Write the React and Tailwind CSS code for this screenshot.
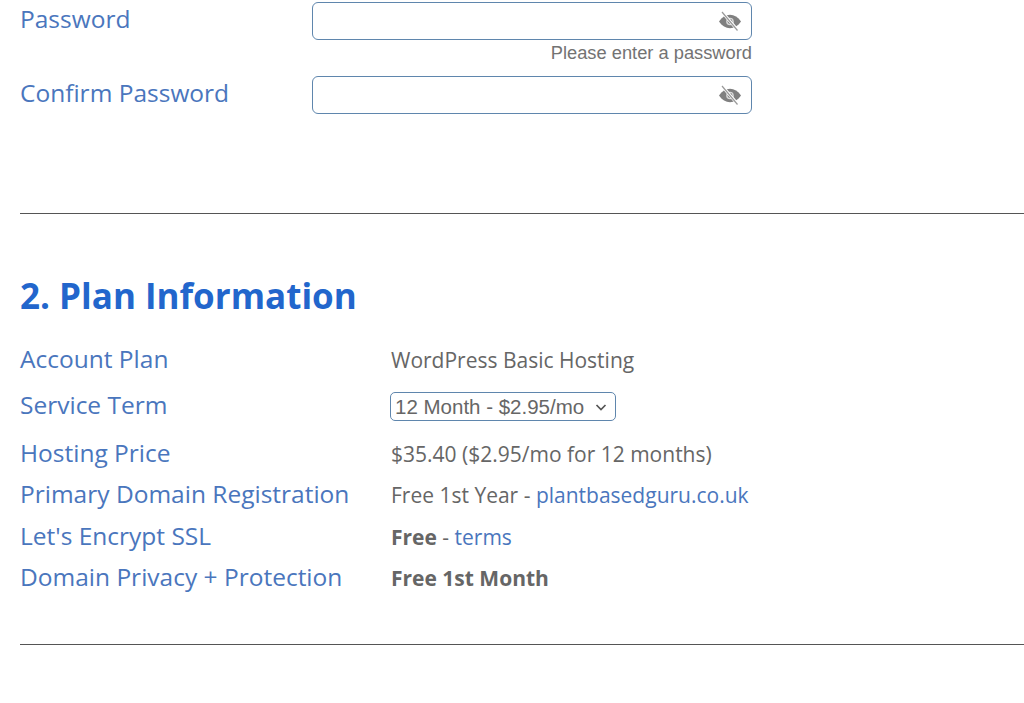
const label = "text-[#4a76bd] text-[24.5px] leading-[30px]";
const value = "text-[#666666] text-[21px] leading-[28px] mt-[2px]";
const link = "text-[#4a76bd]";

function EyeOff() {
  return (
    <svg width="24" height="20" viewBox="0 0 24 20" className="shrink-0">
      <path d="M1 10.5C4 6 7.8 3.8 12 3.8s8 2.2 11 6.700c-3 4.500-6.800 6.700-11 6.700s-8-2.200-11-6.700z" fill="#808080" />
      <circle cx="12" cy="10.500" r="3.800" fill="#d8d8d8" />
      <circle cx="12" cy="10.500" r="2.400" fill="#808080" />
      <path d="M4.500 1.500 19.500 19" stroke="#ffffff" strokeWidth="3" />
      <path d="M4 1 19.500 19.500" stroke="#999999" strokeWidth="1.200" />
    </svg>
  );
}

function PasswordInput() {
  return (
    <div className="w-[440px] h-[38px] border border-[#5f86ad] rounded-[6px] bg-white flex items-center justify-end pr-[9px]">
      <EyeOff />
    </div>
  );
}

function Row({ name, className, children }) {
  return (
    <div className={`flex items-center ${className}`}>
      <div className={`w-[371px] shrink-0 ${label}`}>{name}</div>
      <div className={value}>{children}</div>
    </div>
  );
}

export default function App() {
  return (
    <div className="w-[1024px] h-[703px] overflow-hidden bg-white pl-[20px] pt-[2px]" style={{ fontFamily: '"Open Sans", sans-serif' }}>
      <div className="flex">
        <div className={`w-[292px] shrink-0 ${label} pt-[2px]`}>Password</div>
        <div className="flex flex-col items-end">
          <PasswordInput />
          <div className="text-[#737373] text-[18.3px] leading-[22px] mt-[2px]" style={{ fontFamily: '"Liberation Sans", sans-serif' }}>Please enter a password</div>
        </div>
      </div>
      <div className="flex mt-[12px]">
        <div className={`w-[292px] shrink-0 ${label} pt-[2px]`}>Confirm Password</div>
        <PasswordInput />
      </div>
      <div className="h-px bg-[#555555] mt-[99px]" />
      <h2 className="text-[#2266cc] text-[35px] leading-[46px] font-bold mt-[59px]">2. Plan Information</h2>
      <Row name="Account Plan" className="mt-[25px]">WordPress Basic Hosting</Row>
      <Row name="Service Term" className="mt-[15px]">
        <div className="w-[226px] h-[29px] -ml-[1px] mt-[1px] border border-[#5f86ad] rounded-[5px] flex items-center justify-between pl-[4px] pr-[7px] text-[20.5px]" style={{ fontFamily: '"Liberation Sans", sans-serif' }}>
          <span>12 Month - $2.95/mo</span>
          <svg width="14" height="14" viewBox="0 0 14 14" fill="none" stroke="#555555" strokeWidth="1.700"><path d="M2.500 5 7 9.500 11.500 5" /></svg>
        </div>
      </Row>
      <Row name="Hosting Price" className="mt-[17px]">$35.40 ($2.95/mo for 12 months)</Row>
      <Row name="Primary Domain Registration" className="mt-[11px]">Free 1st Year - <span className={link}>plantbasedguru.co.uk</span></Row>
      <Row name="Let's Encrypt SSL" className="mt-[12px]"><b>Free</b> - <span className={link}>terms</span></Row>
      <Row name="Domain Privacy + Protection" className="mt-[11px]"><b>Free 1st Month</b></Row>
      <div className="h-px bg-[#555555] mt-[52px]" />
    </div>
  );
}
